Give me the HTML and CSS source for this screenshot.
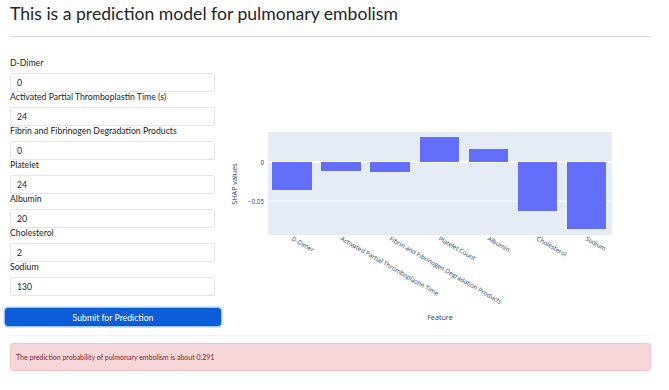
FILE: index.html
```html
<!DOCTYPE html>
<html>
<head>
<meta charset="utf-8">
<link rel="stylesheet" href="styles.css">
</head>
<body>
<div class="page">
  <h1 class="title">This is a prediction model for pulmonary embolism</h1>
  <hr class="rule">
  <div class="row">
    <form class="form">
      <label class="lbl">D-Dimer</label>
      <input class="inp" value="0">
      <label class="lbl">Activated Partial Thromboplastin Time (s)</label>
      <input class="inp" value="24">
      <label class="lbl">Fibrin and Fibrinogen Degradation Products</label>
      <input class="inp" value="0">
      <label class="lbl">Platelet</label>
      <input class="inp" value="24">
      <label class="lbl">Albumin</label>
      <input class="inp" value="20">
      <label class="lbl">Cholesterol</label>
      <input class="inp" value="2">
      <label class="lbl">Sodium</label>
      <input class="inp" value="130">
      <button type="button" class="btn">Submit for Prediction</button>
    </form>
    <svg class="chart" width="425" height="225" viewBox="0 0 425 225">
      <g transform="translate(-226,-100)">
        <rect x="268" y="133" width="344" height="103" fill="#e5ecf6"/>
        <line x1="268" x2="612" y1="202" y2="202" stroke="#fff" stroke-width="1"/>
        <line x1="268" x2="612" y1="163" y2="163" stroke="#fff" stroke-width="2"/>
        <g fill="#636efa">
          <rect x="272" y="163" width="40" height="28"/>
          <rect x="321" y="163" width="40" height="9"/>
          <rect x="370" y="163" width="40" height="10"/>
          <rect x="420" y="138" width="39" height="25"/>
          <rect x="469" y="150" width="39" height="13"/>
          <rect x="518" y="163" width="39" height="49"/>
          <rect x="567" y="163" width="39" height="67"/>
        </g>
        <g class="tick" text-anchor="end">
          <text x="264" y="165.5">0</text>
          <text x="264" y="204.5">−0.05</text>
        </g>
        <g class="tick">
          <text transform="translate(291,241) rotate(30)">D-Dimer</text>
          <text transform="translate(340,241) rotate(30)">Activated Partial Thromboplastin Time</text>
          <text transform="translate(389,241) rotate(30)">Fibrin and Fibrinogen Degradation Products</text>
          <text transform="translate(438,241) rotate(30)">Platelet Count</text>
          <text transform="translate(487,241) rotate(30)">Albumin</text>
          <text transform="translate(536,241) rotate(30)">Cholesterol</text>
          <text transform="translate(585,241) rotate(30)">Sodium</text>
        </g>
        <text class="axt" text-anchor="middle" transform="translate(237,185) rotate(-90)">SHAP values</text>
        <text class="axt" text-anchor="middle" x="440" y="321">Feature</text>
      </g>
    </svg>
  </div>
  <div class="sep"></div>
  <div class="alert">The prediction probability of pulmonary embolism is about 0.291</div>
</div>
</body>
</html>
```
FILE: styles.css
```css
* { box-sizing: border-box; }
html, body { margin: 0; padding: 0; background: #fff; }
body { font-family: Lato, "Noto Sans", sans-serif; color: #212529; }
.page { width: 661px; padding: 4px 10px 0 10px; }
.title { margin: 0; font-size: 17.6px; line-height: 20px; font-weight: 400; color: #212529; }
.rule { margin: 12px 0 0 0; border: 0; border-top: 1px solid #d9d9d9; height: 0; }
.row { display: flex; margin-top: 21px; }
.form { width: 205px; display: flex; flex-direction: column; flex: none; }
.lbl { display: block; font-size: 8.7px; line-height: 10px; padding-bottom: 5px; }
.inp { display: block; width: 205px; height: 19px; border: 1px solid #e3e6ea; border-radius: 2px; padding: 0 0 0 6px; font-family: inherit; font-size: 8.7px; color: #212529; margin: 0; outline: none; }
.btn { margin: 12px -6px 0 -5px; height: 18px; background: #0b5ed7; color: #fff; border: 1px solid #0a58ca; border-radius: 3px; font-family: inherit; font-size: 8.7px; box-shadow: 0 0 0 1.5px rgba(49,132,253,.45); padding: 0; }
.chart { display: block; margin-top: 41px; margin-left: 11px; flex: none; }
.tick { font-family: "Open Sans", sans-serif; font-size: 6.3px; fill: #2a3f5f; }
.axt { font-family: "Open Sans", sans-serif; font-size: 7.2px; fill: #2a3f5f; }
.sep { margin-top: 9px; height: 0; border-top: 1px solid #f2f2f2; }
.alert { margin-top: 7px; height: 28px; background: #f8d7da; border: 1px solid #f5c2c7; border-radius: 3px; color: #842029; font-size: 7px; line-height: 26px; padding-left: 5px; }
```
